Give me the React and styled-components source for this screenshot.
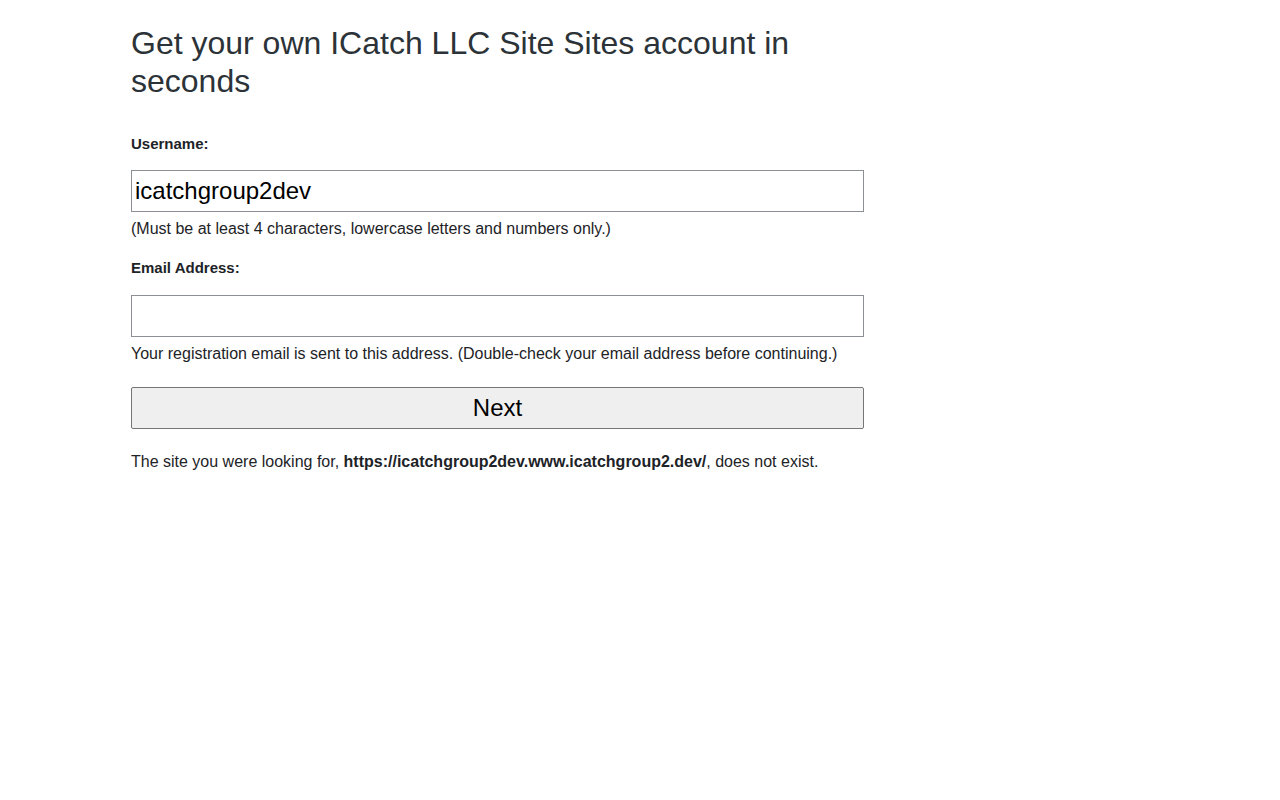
import React from "react";
import styled, { createGlobalStyle } from "styled-components";

const GlobalStyle = createGlobalStyle`
  body {
    margin: 0;
    background: #fff;
    font-family: "Liberation Sans", Arial, sans-serif;
    color: #1d2327;
  }
`;

const Page = styled.div`
  padding-left: 131px;
  padding-top: 24px;
`;

const Register = styled.div`
  width: 733px;
`;

const Title = styled.h2`
  margin: 0 0 34px;
  font-size: 32px;
  line-height: 38px;
  font-weight: 400;
  color: #2c3338;
`;

const Form = styled.form`
  display: flex;
  flex-direction: column;
`;

const Label = styled.label`
  display: block;
  font-size: 15px;
  line-height: 20px;
  font-weight: 700;
  margin-top: ${(p) => (p.$first ? "0" : "19px")};
  margin-bottom: ${(p) => (p.$first ? "16px" : "17px")};
`;

const Input = styled.input`
  box-sizing: border-box;
  width: 100%;
  height: 42px;
  margin: 0;
  padding: 0 3px;
  font-family: "Liberation Sans", Arial, sans-serif;
  font-size: 24px;
  color: #000;
  border: 1px solid #8c8f94;
  border-radius: 0;
  background: #fff;
  outline: none;
`;

const Hint = styled.p`
  margin: 7px 0 0;
  font-size: 16px;
  line-height: 20px;
`;

const NextButton = styled.button`
  box-sizing: border-box;
  width: 100%;
  height: 42px;
  margin-top: 23px;
  font-family: "Liberation Sans", Arial, sans-serif;
  font-size: 24px;
  color: #000;
  background: #efefef;
  border: 1px solid #767676;
  border-radius: 2px;
  cursor: pointer;
`;

const Notice = styled.p`
  margin: 23px 0 0;
  font-size: 16px;
  line-height: 20px;
  white-space: nowrap;

  strong {
    font-weight: 700;
  }
`;

const App = () => {
  return (
    <>
      <GlobalStyle />
      <Page>
        <Register>
          <Title>Get your own ICatch LLC Site Sites account in seconds</Title>
          <Form onSubmit={(e) => e.preventDefault()}>
            <Label $first htmlFor="user_name">
              Username:
            </Label>
            <Input id="user_name" type="text" defaultValue="icatchgroup2dev" />
            <Hint>(Must be at least 4 characters, lowercase letters and numbers only.)</Hint>

            <Label htmlFor="user_email">Email Address:</Label>
            <Input id="user_email" type="email" />
            <Hint>
              Your registration email is sent to this address. (Double-check your email address
              before continuing.)
            </Hint>

            <NextButton type="submit">Next</NextButton>
          </Form>
          <Notice>
            The site you were looking for, <strong>https://icatchgroup2dev.www.icatchgroup2.dev/</strong>,
            does not exist.
          </Notice>
        </Register>
      </Page>
    </>
  );
};

export default App;
